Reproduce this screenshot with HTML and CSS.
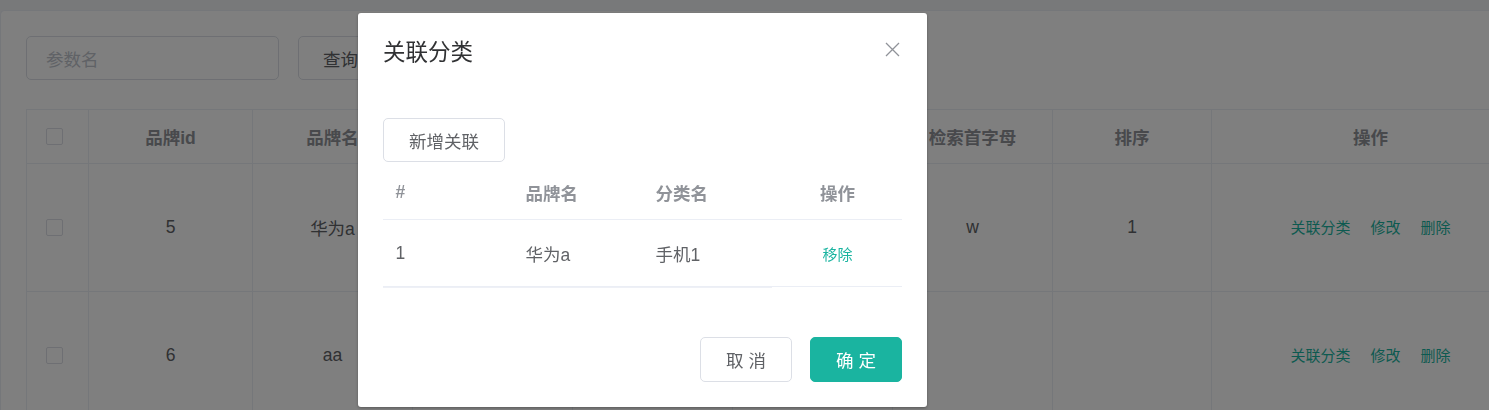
FILE: index.html
```html
<!DOCTYPE html>
<html lang="zh-CN">
<head>
<meta charset="utf-8">
<title>品牌管理</title>
<link rel="stylesheet" href="styles.css">
</head>
<body>
<div class="page">
  <div class="card">
    <div class="toolbar">
      <div class="input"><span class="placeholder">参数名</span></div>
      <button class="btn query">查询</button>
    </div>
    <div class="grid">
      <div class="row head">
        <div class="cell c0"><span class="checkbox"></span></div>
        <div class="cell c1">品牌id</div>
        <div class="cell c2">品牌名</div>
        <div class="cell c3"></div>
        <div class="cell c4"></div>
        <div class="cell c5"></div>
        <div class="cell c6">检索首字母</div>
        <div class="cell c7">排序</div>
        <div class="cell c8">操作</div>
      </div>
      <div class="row body">
        <div class="cell c0"><span class="checkbox"></span></div>
        <div class="cell c1">5</div>
        <div class="cell c2">华为a</div>
        <div class="cell c3"></div>
        <div class="cell c4"></div>
        <div class="cell c5"></div>
        <div class="cell c6">w</div>
        <div class="cell c7">1</div>
        <div class="cell c8"><div class="links"><span>关联分类</span><span>修改</span><span>删除</span></div></div>
      </div>
      <div class="row body">
        <div class="cell c0"><span class="checkbox"></span></div>
        <div class="cell c1">6</div>
        <div class="cell c2">aa</div>
        <div class="cell c3"></div>
        <div class="cell c4"></div>
        <div class="cell c5"></div>
        <div class="cell c6"></div>
        <div class="cell c7"></div>
        <div class="cell c8"><div class="links"><span>关联分类</span><span>修改</span><span>删除</span></div></div>
      </div>
    </div>
  </div>
</div>
<div class="overlay"></div>
<div class="dialog">
  <div class="dlg-header">
    <span class="dlg-title">关联分类</span>
    <svg class="dlg-close" viewBox="0 0 20 20" width="20" height="20"><path d="M4 5 L17 18 M17 5 L4 18" stroke="#909399" stroke-width="1.3" fill="none"/></svg>
  </div>
  <div class="dlg-body">
    <button class="btn add">新增关联</button>
    <div class="tbl">
      <div class="trow th">
        <div class="tc w1">#</div>
        <div class="tc w2">品牌名</div>
        <div class="tc w3">分类名</div>
        <div class="tc w4 center">操作</div>
      </div>
      <div class="trow td">
        <div class="tc w1">1</div>
        <div class="tc w2">华为a</div>
        <div class="tc w3">手机1</div>
        <div class="tc w4 center"><span class="link">移除</span></div>
      </div>
      <div class="tbl-line"></div>
    </div>
  </div>
  <div class="dlg-footer">
    <button class="btn lg">取 消</button>
    <button class="btn lg primary">确 定</button>
  </div>
</div>
</body>
</html>
```
FILE: styles.css
```css
html, body {
  margin: 0;
  height: 410px;
  overflow: hidden;
}
body {
  background: #f0f2f5;
  font-family: "Liberation Sans", "Noto Sans CJK SC", sans-serif;
  color: #606266;
}
.page {
  padding-top: 10px;
}
.card {
  background: #fff;
  border: 1px solid #ebeef5;
  border-right: none;
  border-radius: 5px 0 0 5px;
  padding: 25px 0 0 25px;
  width: 1600px;
  height: 520px;
}
.toolbar {
  display: flex;
  gap: 19px;
  height: 44px;
}
.input {
  width: 253px;
  height: 44px;
  box-sizing: border-box;
  border: 1px solid #dcdfe6;
  border-radius: 5px;
  padding-left: 19px;
  display: flex;
  align-items: center;
  font-size: 17.5px;
  color: #c0c4cc;
}
.btn {
  box-sizing: border-box;
  border: 1px solid #dcdfe6;
  border-radius: 5px;
  background: #fff;
  padding: 0 25px;
  height: 44px;
  font-family: "Liberation Sans", "Noto Sans CJK SC", sans-serif;
  font-size: 17.5px;
  color: #606266;
  display: inline-flex;
  align-items: center;
  justify-content: center;
  white-space: pre;
}
.btn.query {
  padding: 0 24px;
}
.grid {
  margin-top: 29px;
  border-top: 1px solid #ebeef5;
  border-left: 1px solid #ebeef5;
  width: max-content;
}
.row {
  display: flex;
  border-bottom: 1px solid #ebeef5;
}
.row.head {
  height: 53px;
  font-weight: bold;
  color: #909399;
}
.row.body {
  height: 127px;
}
.cell {
  box-sizing: border-box;
  border-right: 1px solid #ebeef5;
  display: flex;
  align-items: center;
  justify-content: center;
  font-size: 17.5px;
}
.c0 { width: 62px; justify-content: flex-start; padding-left: 19px; }
.c1 { width: 164px; }
.c2, .c3, .c4, .c5, .c6 { width: 160px; }
.c7 { width: 159px; }
.c8 { width: 318px; }
.checkbox {
  width: 17px;
  height: 17px;
  box-sizing: border-box;
  border: 1px solid #dcdfe6;
  border-radius: 2px;
  background: #fff;
}
.links {
  display: flex;
  gap: 20px;
  font-size: 15px;
  color: #1ab4a0;
  margin-top: -2px;
}
.overlay {
  position: fixed;
  inset: 0;
  background: rgba(0, 0, 0, 0.5);
}
.dialog {
  position: absolute;
  left: 358px;
  top: 13px;
  width: 569px;
  background: #fff;
  border-radius: 3px;
  box-shadow: 0 1px 3px rgba(0, 0, 0, 0.3);
}
.dlg-header {
  position: relative;
  padding: 25px 25px 12.5px;
  line-height: 30px;
  height: 30px;
}
.dlg-title {
  font-size: 22.5px;
  color: #303133;
}
.dlg-close {
  position: absolute;
  top: 25px;
  right: 25px;
}
.dlg-body {
  padding: 37.5px 25px 36.5px;
}
.tbl {
  font-size: 17.5px;
}
.trow {
  display: flex;
  border-bottom: 1px solid #ebeef5;
}
.trow.th {
  height: 57px;
  font-weight: bold;
  color: #909399;
}
.trow.th .tc {
  padding-top: 3px;
}
.trow.td {
  height: 66px;
  color: #606266;
}
.tc {
  box-sizing: border-box;
  padding-left: 12.5px;
  display: flex;
  align-items: center;
}
.w1, .w2, .w3 { width: 130px; }
.w4 { width: 129px; }
.tc.center {
  justify-content: center;
  padding-left: 0;
}
.link {
  font-size: 15px;
  color: #1ab4a0;
}
.tbl-line {
  width: 389px;
  height: 1px;
  background: #eef0f6;
}
.dlg-footer {
  display: flex;
  justify-content: flex-end;
  gap: 18px;
  padding: 12.5px 25px 25px;
}
.btn.lg {
  width: 92px;
  height: 45px;
  padding: 0;
}
.btn.primary {
  background: #1ab4a0;
  border-color: #1ab4a0;
  color: #fff;
}
```
